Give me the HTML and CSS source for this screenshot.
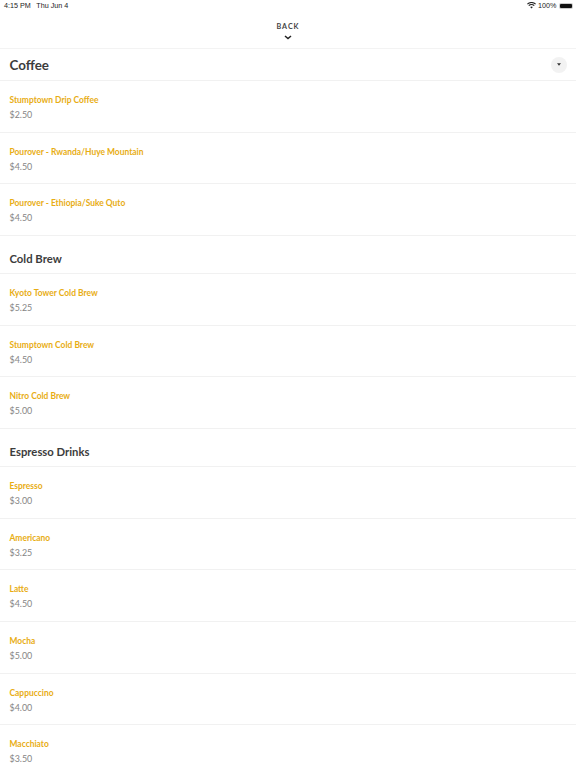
FILE: index.html
```html
<!DOCTYPE html>
<html lang="en">
<head>
<meta charset="utf-8">
<title>Menu</title>
<link rel="stylesheet" href="styles.css">
</head>
<body>
<div class="status">
  <div class="status-left"><span>4:15 PM</span><span>Thu Jun 4</span></div>
  <div class="status-right">
    <svg class="wifi" viewBox="0 0 16 12" width="9" height="7"><path d="M8 11.5 5.6 8.8a3.4 3.4 0 0 1 4.8 0zM3.9 7.1 2.4 5.5a8 8 0 0 1 11.2 0l-1.5 1.6a5.8 5.8 0 0 0-8.2 0zM1.3 4.4 0 3a11.4 11.4 0 0 1 16 0l-1.3 1.4a9.6 9.6 0 0 0-13.4 0z" fill="#222"/></svg>
    <span>100%</span>
    <span class="battery"><span class="battery-fill"></span></span>
  </div>
</div>
<header class="back">
  <span class="back-label">BACK</span>
  <svg class="chevron" viewBox="0 0 8 5" width="8" height="5"><path d="M1 1l3 2.6L7 1" fill="none" stroke="#222" stroke-width="1.5"/></svg>
</header>
<main>
  <section>
    <div class="head head-first"><h1>Coffee</h1>
      <span class="toggle"><svg viewBox="0 0 5 3" width="4" height="3"><path d="M0 0h5L2.5 3z" fill="#333"/></svg></span>
    </div>
    <div class="item"><div class="name">Stumptown Drip Coffee</div><div class="price">$2.50</div></div>
    <div class="item"><div class="name">Pourover - Rwanda/Huye Mountain</div><div class="price">$4.50</div></div>
    <div class="item"><div class="name">Pourover - Ethiopia/Suke Quto</div><div class="price">$4.50</div></div>
  </section>
  <section>
    <div class="head"><h2>Cold Brew</h2></div>
    <div class="item"><div class="name">Kyoto Tower Cold Brew</div><div class="price">$5.25</div></div>
    <div class="item"><div class="name">Stumptown Cold Brew</div><div class="price">$4.50</div></div>
    <div class="item"><div class="name">Nitro Cold Brew</div><div class="price">$5.00</div></div>
  </section>
  <section>
    <div class="head"><h2>Espresso Drinks</h2></div>
    <div class="item"><div class="name">Espresso</div><div class="price">$3.00</div></div>
    <div class="item"><div class="name">Americano</div><div class="price">$3.25</div></div>
    <div class="item"><div class="name">Latte</div><div class="price">$4.50</div></div>
    <div class="item"><div class="name">Mocha</div><div class="price">$5.00</div></div>
    <div class="item"><div class="name">Cappuccino</div><div class="price">$4.00</div></div>
    <div class="item"><div class="name">Macchiato</div><div class="price">$3.50</div></div>
  </section>
</main>
</body>
</html>
```
FILE: styles.css
```css
html, body {
  margin: 0;
  padding: 0;
  height: 768px;
  overflow: hidden;
  background: #fff;
  font-family: Lato, "Open Sans", sans-serif;
}
.status {
  height: 15px;
  display: flex;
  justify-content: space-between;
  align-items: center;
  padding: 0 3px 4px 4px;
  box-sizing: border-box;
  font-family: "Liberation Sans", sans-serif;
  font-size: 7.2px;
  color: #222;
}
.status-left { display: flex; gap: 5.5px; }
.status-right { display: flex; align-items: center; gap: 2.5px; }
.battery {
  display: block;
  width: 14px;
  height: 6px;
  padding: 1px;
  box-sizing: border-box;
  border-radius: 2px;
  background: #ccc;
}
.battery-fill { display: block; height: 100%; background: #111; border-radius: 1px; }
.back {
  height: 34px;
  padding-top: 8px;
  box-sizing: border-box;
  display: flex;
  flex-direction: column;
  align-items: center;
  gap: 4px;
  border-bottom: 1px solid #f3f3f3;
}
.back-label {
  font-size: 7.2px;
  line-height: 8px;
  font-weight: 700;
  letter-spacing: 0.95px;
  color: #444;
}
.chevron { display: block; }
.head {
  display: flex;
  align-items: center;
  justify-content: space-between;
  padding: 8px 9.5px 0;
  height: 38px;
  box-sizing: border-box;
  border-bottom: 1px solid #f1f1f1;
}
.head-first { height: 32px; padding: 0 9px 0 9.5px; }
h1, h2 { margin: 0; color: #3c3c3c; font-weight: 700; }
h1 { font-size: 13.4px; }
h2 { font-size: 11.3px; }
.toggle {
  width: 16px;
  height: 16px;
  border-radius: 50%;
  background: #f2f2f2;
  display: flex;
  align-items: center;
  justify-content: center;
}
.item {
  height: 51.67px;
  box-sizing: border-box;
  padding: 12px 9.5px 0;
  border-bottom: 1px solid #f1f1f1;
}
.name {
  font-size: 8.45px;
  line-height: 14px;
  font-weight: 700;
  color: #e8ad14;
}
.price {
  font-size: 8.9px;
  line-height: 14px;
  margin-top: 1px;
  color: #858585;
}
```
